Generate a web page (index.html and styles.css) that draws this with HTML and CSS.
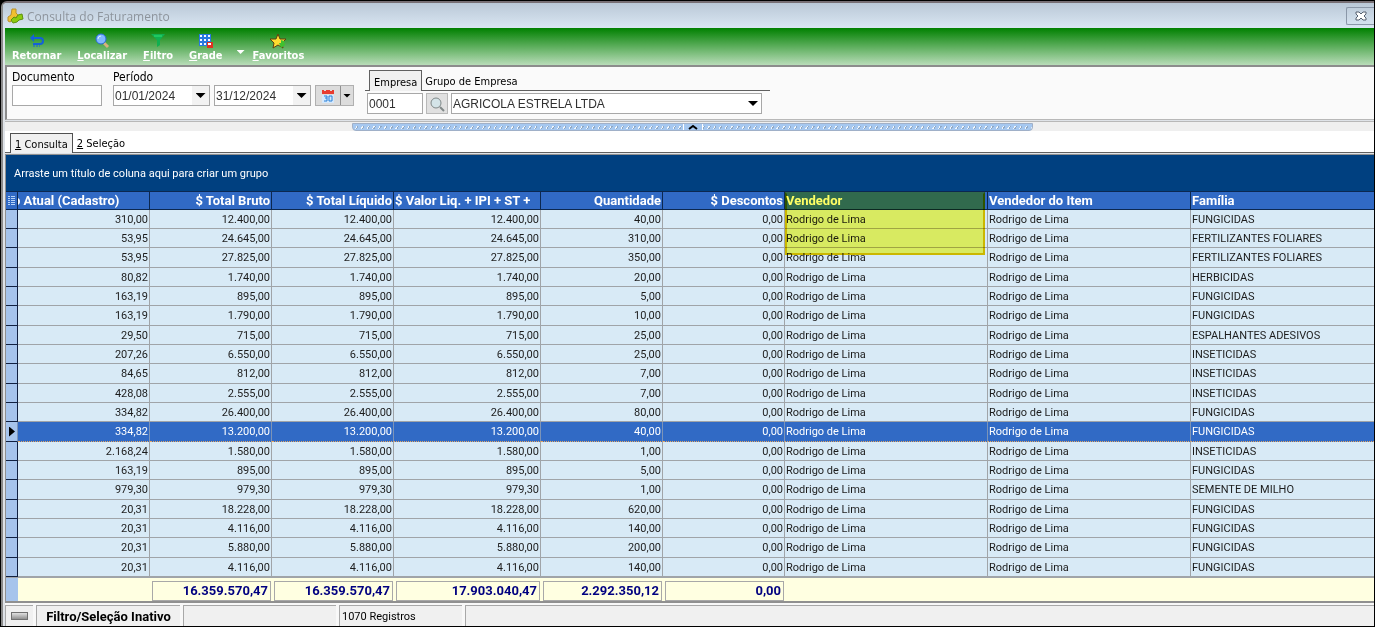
FILE: index.html
```
<!DOCTYPE html>
<html lang="pt-BR">
<head>
  <meta charset="utf-8">
  <meta name="viewport" content="width=device-width, initial-scale=1.0">
  <title>Consulta do Faturamento</title>
  <link rel="stylesheet" href="styles.css">
</head>
<body>
  <div class="window">
    <!-- Title bar -->
    <header class="title-bar">
      <svg class="app-icon" width="17" height="16" viewBox="0 0 17 16">
        <path d="M5 1h4v4l2 2-3 4-2 1-3 2-2-1v-4l3-2z" fill="#f0c030" stroke="#b8902c"/>
        <path d="M4 12l3-3 2 1 2-3 4-1 1 5-4 1-2 2-4 1z" fill="#8ccc10" stroke="#5c9010"/>
      </svg>
      <h1 class="title">Consulta do Faturamento</h1>
      <button class="close-btn" aria-label="Fechar">
        <svg width="12" height="10" viewBox="0 0 12 10">
          <path d="M1 1h3l2 2 2-2h3v2L9 5l2 2v2H8L6 7 4 9H1V7l2-2-2-2z" fill="#fff" stroke="#566070"/>
        </svg>
      </button>
    </header>

    <!-- Toolbar -->
    <nav class="toolbar">
      <button class="tool-btn">
        <svg width="16" height="16" viewBox="0 0 16 16">
          <path d="M5 5h6q3 0 3 3t-3 3H4" fill="none" stroke="#1460d8" stroke-width="2"/>
          <path d="M1 5l4-4v8z" fill="#1460d8"/>
          <path d="M4 13h7" stroke="#1460d8" stroke-dasharray="2 1"/>
        </svg>
        <span>Retornar</span>
      </button>
      <button class="tool-btn">
        <svg width="16" height="16" viewBox="0 0 16 16">
          <path d="M10 10l4 4" stroke="#d8b080" stroke-width="3"/>
          <circle cx="7" cy="6" r="5" fill="#80b8ff" stroke="#2868d8"/>
          <path d="M4 6q0-3 3-3" fill="none" stroke="#d8ecff"/>
        </svg>
        <span><u>L</u>ocalizar</span>
      </button>
      <button class="tool-btn">
        <svg width="16" height="16" viewBox="0 0 16 16">
          <path d="M1 1h14l-5 6v5l-3 2V7z" fill="#10b050"/>
          <path d="M4 3h8" stroke="#30e070" stroke-width="1"/>
        </svg>
        <span><u>F</u>iltro</span>
      </button>
      <button class="tool-btn">
        <svg width="16" height="16" viewBox="0 0 16 16">
          <path d="M1 1h12v12H1z" fill="#2878e0"/>
          <path d="M2 2h2v2H2zM6 2h2v2H6zM10 2h2v2h-2zM2 6h2v2H2zM6 6h2v2H6zM10 6h2v2h-2zM2 10h2v2H2zM6 10h2v2H6z" fill="#f4f8ff"/>
          <path d="M9 9h6v6H9z" fill="#e03020"/>
          <path d="M10 11h3" stroke="#fff" stroke-width="2"/>
        </svg>
        <span><u>G</u>rade</span>
      </button>
      <button class="tool-more" aria-label="Mais opções de grade"></button>
      <button class="tool-btn">
        <svg width="18" height="16" viewBox="0 0 18 16">
          <path d="M9 1l2 5h6l-4 4 1 5-5-3-5 3 1-5-4-4h6z" fill="#ffdc30" stroke="#604010"/>
          <path d="M12 7v3h-2l2 5 4-3-1-4z" fill="#40c030"/>
        </svg>
        <span><u>F</u>avoritos</span>
      </button>
    </nav>

    <!-- Filters -->
    <form class="filters">
      <div class="field">
        <label for="documento">Documento</label>
        <input class="box documento" id="documento" type="text">
      </div>

      <div class="field">
        <label for="data-inicial">Período</label>
        <div class="period">
          <div class="date-box">
            <input id="data-inicial" type="text" value="01/01/2024">
            <button type="button" class="drop-btn" aria-label="Abrir data inicial"></button>
          </div>
          <div class="date-box">
            <input type="text" value="31/12/2024" aria-label="Data final">
            <button type="button" class="drop-btn" aria-label="Abrir data final"></button>
          </div>
          <div class="calendar">
            <button type="button" class="calendar-btn" aria-label="Calendário 30">
              <svg width="14" height="14" viewBox="0 0 14 14">
                <path d="M1 6h12v8H1z" fill="#d4e8fc"/>
                <path d="M1 1h2v1h2V1h4v1h2V1h2v4H1z" fill="#e83c30"/>
                <path d="M3 7h3v5H3M4 9h2M8 7h3v5H8z" fill="none" stroke="#2880d8"/>
              </svg>
            </button>
            <button type="button" class="calendar-drop" aria-label="Períodos"></button>
          </div>
        </div>
      </div>

      <div class="company">
        <div class="company-tabs">
          <button type="button" class="company-tab active">Empresa</button>
          <button type="button" class="company-tab">Grupo de Empresa</button>
        </div>
        <div class="company-fields">
          <input class="box codigo" type="text" value="0001" aria-label="Código da empresa">
          <button type="button" class="search-btn" aria-label="Buscar empresa">
            <svg width="16" height="16" viewBox="0 0 16 16">
              <circle cx="7" cy="7" r="5" fill="#d4e4e8" stroke="#808888"/>
              <path d="M11 11l4 4" stroke="#808888" stroke-width="2"/>
            </svg>
          </button>
          <div class="select-box">
            <select class="box" aria-label="Empresa">
              <option>AGRICOLA ESTRELA LTDA</option>
            </select>
          </div>
        </div>
      </div>
    </form>

    <!-- Collapse bar -->
    <div class="splitter">
      <div class="splitter-grip">
        <button class="splitter-btn" aria-label="Recolher filtros">
          <svg width="10" height="6" viewBox="0 0 10 6"><path d="M1 5l4-3 4 3" fill="none" stroke="#000" stroke-width="2"/></svg>
        </button>
      </div>
    </div>

    <div class="tabs">
      <button class="tab active"><u>1</u> Consulta</button>
      <button class="tab"><u>2</u> Seleção</button>
    </div>

    <!-- Grid -->
    <main class="grid">
      <div class="group-panel">Arraste um título de coluna aqui para criar um grupo</div>
      <table>
        <colgroup>
          <col class="col-mark"><col class="col-atual"><col class="col-num"><col class="col-num"><col class="col-valor">
          <col class="col-num"><col class="col-num"><col class="col-name"><col class="col-name"><col>
        </colgroup>
        <thead>
          <tr>
            <th class="mark"><svg width="10" height="11" viewBox="0 0 10 11"><path d="M2 1h2v1H2zM2 3h2v1H2zM2 5h2v1H2zM2 7h2v1H2zM2 9h2v1H2zM5 1h4v1H5zM5 3h4v1H5zM5 5h4v1H5zM5 7h4v1H5zM5 9h4v1H5z" fill="#b8d4f8"/></svg></th>
            <th class="cut"><span>o Atual (Cadastro)</span></th>
            <th class="num">$ Total Bruto</th>
            <th class="num">$ Total Líquido</th>
            <th>$ Valor Liq. + IPI + ST +</th>
            <th class="num">Quantidade</th>
            <th class="num">$ Descontos</th>
            <th class="marked">Vendedor<div class="highlight"></div></th>
            <th>Vendedor do Item</th>
            <th>Família</th>
          </tr>
        </thead>
        <tbody>
          <tr><td></td><td>310,00</td><td>12.400,00</td><td>12.400,00</td><td>12.400,00</td><td>40,00</td><td>0,00</td><td>Rodrigo de Lima</td><td>Rodrigo de Lima</td><td>FUNGICIDAS</td></tr>
          <tr><td></td><td>53,95</td><td>24.645,00</td><td>24.645,00</td><td>24.645,00</td><td>310,00</td><td>0,00</td><td>Rodrigo de Lima</td><td>Rodrigo de Lima</td><td>FERTILIZANTES FOLIARES</td></tr>
          <tr><td></td><td>53,95</td><td>27.825,00</td><td>27.825,00</td><td>27.825,00</td><td>350,00</td><td>0,00</td><td>Rodrigo de Lima</td><td>Rodrigo de Lima</td><td>FERTILIZANTES FOLIARES</td></tr>
          <tr><td></td><td>80,82</td><td>1.740,00</td><td>1.740,00</td><td>1.740,00</td><td>20,00</td><td>0,00</td><td>Rodrigo de Lima</td><td>Rodrigo de Lima</td><td>HERBICIDAS</td></tr>
          <tr><td></td><td>163,19</td><td>895,00</td><td>895,00</td><td>895,00</td><td>5,00</td><td>0,00</td><td>Rodrigo de Lima</td><td>Rodrigo de Lima</td><td>FUNGICIDAS</td></tr>
          <tr><td></td><td>163,19</td><td>1.790,00</td><td>1.790,00</td><td>1.790,00</td><td>10,00</td><td>0,00</td><td>Rodrigo de Lima</td><td>Rodrigo de Lima</td><td>FUNGICIDAS</td></tr>
          <tr><td></td><td>29,50</td><td>715,00</td><td>715,00</td><td>715,00</td><td>25,00</td><td>0,00</td><td>Rodrigo de Lima</td><td>Rodrigo de Lima</td><td>ESPALHANTES ADESIVOS</td></tr>
          <tr><td></td><td>207,26</td><td>6.550,00</td><td>6.550,00</td><td>6.550,00</td><td>25,00</td><td>0,00</td><td>Rodrigo de Lima</td><td>Rodrigo de Lima</td><td>INSETICIDAS</td></tr>
          <tr><td></td><td>84,65</td><td>812,00</td><td>812,00</td><td>812,00</td><td>7,00</td><td>0,00</td><td>Rodrigo de Lima</td><td>Rodrigo de Lima</td><td>INSETICIDAS</td></tr>
          <tr><td></td><td>428,08</td><td>2.555,00</td><td>2.555,00</td><td>2.555,00</td><td>7,00</td><td>0,00</td><td>Rodrigo de Lima</td><td>Rodrigo de Lima</td><td>INSETICIDAS</td></tr>
          <tr><td></td><td>334,82</td><td>26.400,00</td><td>26.400,00</td><td>26.400,00</td><td>80,00</td><td>0,00</td><td>Rodrigo de Lima</td><td>Rodrigo de Lima</td><td>FUNGICIDAS</td></tr>
          <tr class="selected"><td></td><td>334,82</td><td>13.200,00</td><td>13.200,00</td><td>13.200,00</td><td>40,00</td><td>0,00</td><td>Rodrigo de Lima</td><td>Rodrigo de Lima</td><td>FUNGICIDAS</td></tr>
          <tr><td></td><td>2.168,24</td><td>1.580,00</td><td>1.580,00</td><td>1.580,00</td><td>1,00</td><td>0,00</td><td>Rodrigo de Lima</td><td>Rodrigo de Lima</td><td>INSETICIDAS</td></tr>
          <tr><td></td><td>163,19</td><td>895,00</td><td>895,00</td><td>895,00</td><td>5,00</td><td>0,00</td><td>Rodrigo de Lima</td><td>Rodrigo de Lima</td><td>FUNGICIDAS</td></tr>
          <tr><td></td><td>979,30</td><td>979,30</td><td>979,30</td><td>979,30</td><td>1,00</td><td>0,00</td><td>Rodrigo de Lima</td><td>Rodrigo de Lima</td><td>SEMENTE DE MILHO</td></tr>
          <tr><td></td><td>20,31</td><td>18.228,00</td><td>18.228,00</td><td>18.228,00</td><td>620,00</td><td>0,00</td><td>Rodrigo de Lima</td><td>Rodrigo de Lima</td><td>FUNGICIDAS</td></tr>
          <tr><td></td><td>20,31</td><td>4.116,00</td><td>4.116,00</td><td>4.116,00</td><td>140,00</td><td>0,00</td><td>Rodrigo de Lima</td><td>Rodrigo de Lima</td><td>FUNGICIDAS</td></tr>
          <tr><td></td><td>20,31</td><td>5.880,00</td><td>5.880,00</td><td>5.880,00</td><td>200,00</td><td>0,00</td><td>Rodrigo de Lima</td><td>Rodrigo de Lima</td><td>FUNGICIDAS</td></tr>
          <tr><td></td><td>20,31</td><td>4.116,00</td><td>4.116,00</td><td>4.116,00</td><td>140,00</td><td>0,00</td><td>Rodrigo de Lima</td><td>Rodrigo de Lima</td><td>FUNGICIDAS</td></tr>
        </tbody>
        <tfoot>
          <tr>
            <td></td>
            <td></td>
            <td><div class="sum">16.359.570,47</div></td>
            <td><div class="sum">16.359.570,47</div></td>
            <td><div class="sum">17.903.040,47</div></td>
            <td><div class="sum">2.292.350,12</div></td>
            <td><div class="sum">0,00</div></td>
            <td></td>
            <td></td>
            <td></td>
          </tr>
        </tfoot>
      </table>
    </main>

    <!-- Status bar -->
    <footer class="status-bar">
      <div class="status-item led"><span></span></div>
      <div class="status-item filter-state">Filtro/Seleção Inativo</div>
      <div class="status-item blank"></div>
      <div class="status-item records">1070 Registros</div>
      <div class="status-item rest"></div>
    </footer>
  </div>
</body>
</html>
```
FILE: styles.css
```
* {
  margin: 0;
  padding: 0;
  box-sizing: border-box;
}

body {
  min-height: 100vh;
  display: flex;
  font-family: "DejaVu Sans Condensed", "Noto Sans", sans-serif;
  font-size: 11px;
  color: #000;
  background: #000;
}

button,
input,
select {
  font: inherit;
  color: inherit;
  border: none;
  border-radius: 0;
  background: none;
}

svg {
  display: block;
}

.window {
  flex: 1;
  min-width: 0;
  display: flex;
  flex-direction: column;
  margin: 1px;
  padding-left: 2px;
  border-top: 2px solid #776f74;
  border-left: 2px solid #8a8a8a;
  border-top-left-radius: 6px;
  background: #dfe3e8;
  overflow: hidden;
}

/* Title bar */
.title-bar {
  display: flex;
  align-items: center;
  height: 25px;
  margin-left: -2px;
  padding-left: 4px;
  background: linear-gradient(#bac8d7, #d9e6f2);
}

.title {
  flex: 1;
  margin-left: 3px;
  padding-top: 2px;
  font-family: "Open Sans", sans-serif;
  font-size: 12px;
  font-weight: 400;
  color: #8d949c;
}

.close-btn {
  display: flex;
  align-items: center;
  justify-content: center;
  width: 28px;
  height: 18px;
  border: 1px solid #8a97a8;
  border-right: none;
  border-radius: 2px 0 0 2px;
}

/* Toolbar */
.toolbar {
  display: flex;
  height: 37px;
  padding: 5px 7px 0;
  gap: 16px;
  background: linear-gradient(#008000, #b8dcb8);
}

.tool-btn {
  display: flex;
  flex-direction: column;
  align-items: center;
  font-weight: 700;
  line-height: 14px;
  color: #fff;
}

.tool-more {
  width: 8px;
  height: 4px;
  margin: 17px -8px 0 -2px;
  background: #fff;
  clip-path: polygon(0 0, 100% 0, 50% 100%);
}

/* Filters */
.filters {
  display: flex;
  height: 55px;
  padding: 3px 5px 0;
  border-top: 2px solid #8c8c8c;
  border-left: 2px solid #8c8c8c;
  border-bottom: 1px solid #b8b8b8;
  background: #fafafa;
}

.field {
  margin-right: 11px;
}

.field label {
  display: block;
  font-size: 12px;
  line-height: 15px;
}

.box,
.date-box {
  height: 21px;
  border: 1px solid #a8a8a8;
  background: #fff;
  font-family: "Liberation Sans", sans-serif;
  font-size: 12px;
  color: #303030;
}

.documento {
  width: 90px;
}

.period {
  display: flex;
  gap: 4px;
}

.date-box {
  display: flex;
  width: 97px;
}

.date-box input {
  flex: 1;
  min-width: 0;
  padding-left: 1px;
}

.drop-btn,
.calendar-drop {
  display: flex;
  align-items: center;
  justify-content: center;
  width: 17px;
  background: #f2f2f2;
}

.drop-btn::after,
.calendar-drop::after,
.select-box::after {
  content: "";
  width: 10px;
  height: 5px;
  background: #000;
  clip-path: polygon(0 0, 100% 0, 50% 100%);
}

.calendar {
  display: flex;
  height: 21px;
  border: 1px solid #b0b0b0;
  background: #dcdcdc;
}

.calendar-btn {
  display: flex;
  align-items: center;
  justify-content: center;
  width: 24px;
}

.calendar-drop {
  width: 13px;
  border-left: 1px solid #909090;
  background: #dcdcdc;
}

.calendar-drop::after {
  width: 8px;
  height: 4px;
}

.company {
  width: 405px;
}

.company-tabs {
  display: flex;
  height: 21px;
  padding-left: 4px;
  border-bottom: 1px solid #606060;
}

.company-tab {
  padding: 2px 3px 0;
}

.company-tab.active {
  height: 21px;
  padding: 2px 4px 0;
  border: 1px solid #606060;
  border-bottom: none;
  background: #f0f0f0;
}

.company-fields {
  display: flex;
  gap: 3px;
  margin-top: 2px;
  padding: 0 8px 0 2px;
}

.codigo {
  width: 56px;
  padding-left: 1px;
}

.search-btn {
  display: flex;
  align-items: center;
  justify-content: center;
  width: 22px;
  border: 1px solid #b8b8b8;
  background: #e0e0e0;
}

.select-box {
  position: relative;
  flex: 1;
}

.select-box select {
  width: 100%;
  padding-left: 1px;
  appearance: none;
}

.select-box::after {
  position: absolute;
  top: 8px;
  right: 4px;
  pointer-events: none;
}

/* Collapse bar */
.splitter {
  display: flex;
  justify-content: center;
  height: 10px;
  margin-top: 1px;
  padding: 1px 0 0 6px;
  border-top: 1px solid #b8b8b8;
  background: #efefef;
}

.splitter-grip {
  display: flex;
  justify-content: center;
  width: 50%;
  height: 8px;
  border: 1px solid #a0b0c8;
  border-radius: 0 0 4px 4px;
  background: repeating-linear-gradient(120deg, #a6c8f0 0 3px, #f0f6fc 3px 4px, #90a8c4 4px 5px) center / 100% 3px no-repeat #a6c8f0;
}

.splitter-btn {
  display: flex;
  justify-content: center;
  width: 20px;
  border-left: 1px solid #fff;
  border-right: 1px solid #fff;
  background: #a6c8f0;
}

/* Tabs */
.tabs {
  display: flex;
  height: 22px;
  padding: 2px 5px 0;
  border-bottom: 1px solid #606060;
  background: #fff;
}

.tab {
  padding: 2px 4px 0;
}

.tab.active {
  height: 20px;
  border: 1px solid #505050;
  border-bottom: none;
  background: #f0f0f0;
}

/* Grid */
.grid {
  margin-top: 1px;
  border-top: 1px solid #909090;
  border-left: 1px solid #909090;
  font-family: Roboto, sans-serif;
}

.group-panel {
  height: 36px;
  padding: 0 8px;
  line-height: 37px;
  color: #fff;
  background: #004080;
}

table {
  width: 100%;
  table-layout: fixed;
  border-spacing: 0;
}

.col-mark { width: 12px; }
.col-atual { width: 132px; }
.col-num { width: 122px; }
.col-valor { width: 147px; }
.col-name { width: 203px; }

th,
td {
  white-space: nowrap;
  overflow: hidden;
}

th {
  height: 19px;
  padding: 0 1px;
  border-top: 1px solid #0c2850;
  border-right: 1px solid #0c2850;
  border-bottom: 1px solid #0c2850;
  font-size: 13px;
  font-weight: 700;
  line-height: 17px;
  text-align: left;
  color: #fff;
  background: #316ac5;
}

th.num {
  text-align: right;
}

th.mark {
  padding: 0;
}

.cut span {
  margin-left: -6px;
}

th.marked {
  position: relative;
  overflow: visible;
}

.highlight {
  position: absolute;
  top: 0;
  left: 0;
  right: 2px;
  height: 63px;
  border: 2px solid #f0c800;
  border-top-color: #ffff64;
  background: #ffff64;
  mix-blend-mode: multiply;
}

tbody td {
  height: 19px;
  padding: 0 1px;
  border-right: 1px solid #a0a4a8;
  border-bottom: 1px solid #a0a4a8;
  color: #1c1c1c;
  background: #d8eaf6;
}

tbody tr:nth-child(3n) td {
  height: 20px;
}

tbody td:nth-child(-n+7) {
  text-align: right;
}

tbody td:first-child {
  border-color: #102040;
  background: #a6c4ec;
}

tbody .selected td {
  border-right-color: #7c94b8;
  border-bottom: 1px dotted #e8a860;
  color: #fff;
  background: #316ac5;
}

tbody .selected td:first-child {
  border-bottom: 1px solid #102040;
  background: #a6c4ec;
}

.selected td:first-child::after {
  content: "";
  display: block;
  width: 6px;
  height: 10px;
  margin-left: 2px;
  background: #000;
  clip-path: polygon(0 0, 100% 50%, 0 100%);
}

th:last-child,
td:last-child {
  border-right: none;
}

tfoot td {
  height: 26px;
  padding: 2px 1px 0 2px;
  border-top: 1px solid #a0a4a8;
  border-bottom: 2px solid #909090;
  background: #ffffe1;
}

tfoot td:first-child {
  background: #a6c4ec;
}

.sum {
  height: 20px;
  padding-right: 2px;
  border: 1px solid #a8a8a8;
  font-size: 13px;
  font-weight: 700;
  line-height: 18px;
  text-align: right;
  color: #000080;
}

/* Status bar */
.status-bar {
  flex: 1;
  display: flex;
  gap: 3px;
  min-height: 22px;
  padding-top: 2px;
  background: #f8f8f8;
  font-family: Roboto, sans-serif;
}

.status-item {
  display: flex;
  align-items: center;
  padding: 0 2px;
  border-top: 1px solid #a8a8a8;
  border-left: 1px solid #a8a8a8;
  background: #f0f0f0;
}

.led {
  justify-content: center;
  width: 28px;
}

.led span {
  width: 17px;
  height: 8px;
  border: 1px solid #707070;
  background: linear-gradient(#e0e0e0, #909090);
}

.filter-state {
  justify-content: center;
  width: 144px;
  font-size: 13px;
  font-weight: 700;
}

.blank {
  width: 153px;
}

.records {
  width: 123px;
}

.rest {
  flex: 1;
}
```
